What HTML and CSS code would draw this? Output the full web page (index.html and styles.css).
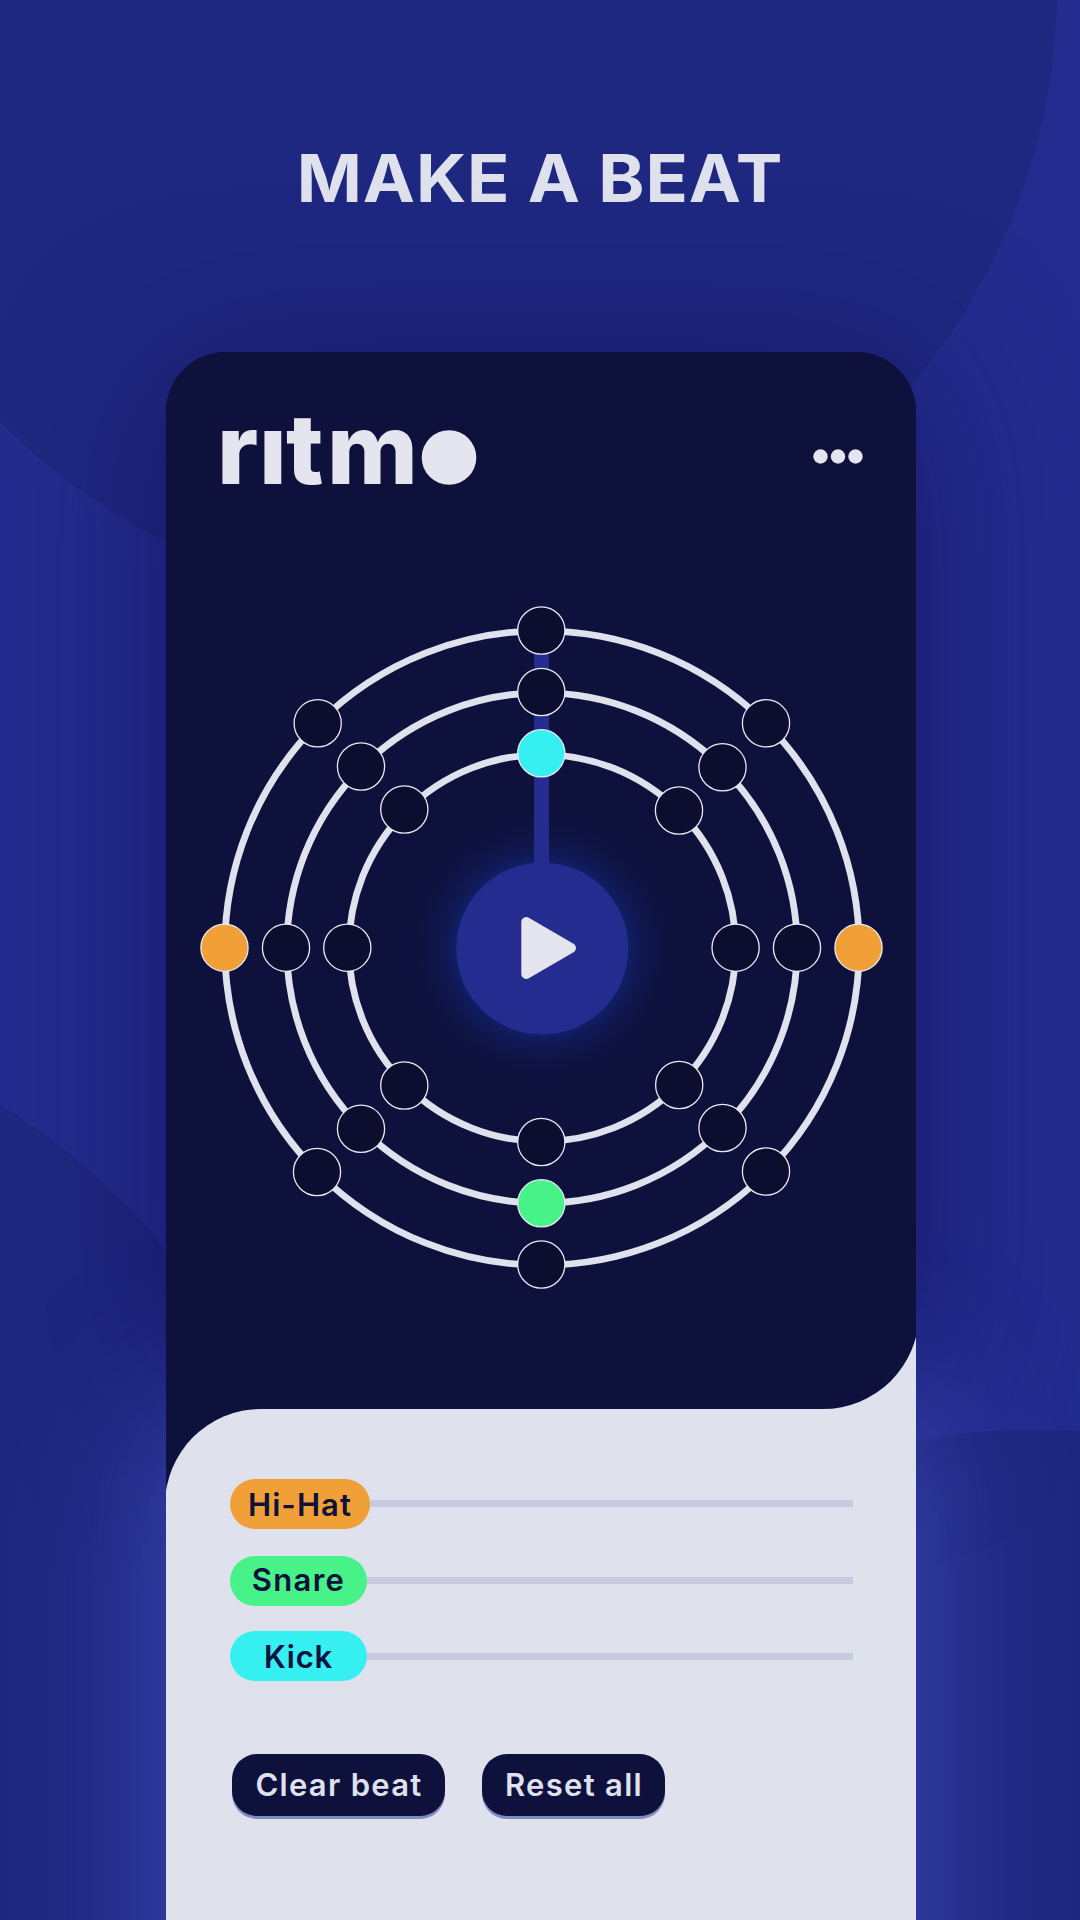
FILE: index.html
```html
<!DOCTYPE html>
<html lang="en">
<head>
<meta charset="utf-8">
<title>Ritmo</title>
<link rel="stylesheet" href="styles.css">
</head>
<body>
<main class="page">
  <svg class="backdrop" width="1080" height="1920" viewBox="0 0 1080 1920" aria-hidden="true">
    <circle cx="439" cy="-13" r="618"/>
    <circle cx="-319" cy="1634" r="618"/>
    <circle cx="1030" cy="2048" r="618"/>
  </svg>
  <h1 class="title">MAKE A BEAT</h1>
  <section class="phone">
    <div class="player">
      <div class="deck">
        <header class="topbar">
          <svg class="logo" width="256" height="72" viewBox="0 0 256 72" role="img" aria-label="ritmo">
            <text class="logo-text" x="-5 37 64 105" y="68">rıtm</text>
            <circle cx="227" cy="41.5" r="27.3"/>
          </svg>
          <svg class="menu" width="50" height="16" viewBox="0 0 50 16" role="img" aria-label="Menu">
            <circle cx="7.5" cy="8.5" r="7.2"/><circle cx="25" cy="8.5" r="7.2"/><circle cx="42.5" cy="8.5" r="7.2"/>
          </svg>
        </header>
        <svg class="sequencer" width="750" height="720" viewBox="166 588 750 720">
          <defs>
            <radialGradient id="glow">
              <stop offset="0.6" stop-color="#10206c"/>
              <stop offset="0.7" stop-color="#101a58" stop-opacity="0.85"/>
              <stop offset="0.82" stop-color="#0e164a" stop-opacity="0.6"/>
              <stop offset="1" stop-color="#0e1340" stop-opacity="0"/>
            </radialGradient>
          </defs>
          <circle cx="542.3" cy="948.5" r="138" fill="url(#glow)"/>
          <g class="rings">
            <circle cx="542" cy="948" r="317.2"/>
            <circle cx="542" cy="948" r="255.2"/>
            <circle cx="542.3" cy="948" r="193.4"/>
          </g>
          <rect class="hand" x="534" y="640" width="15" height="225"/>
          <g class="nodes">
            <circle cx="541.3" cy="630.5" r="23.6"/>
            <circle cx="766" cy="723.3" r="23.6"/>
            <circle class="hihat" cx="858.5" cy="947.7" r="23.6"/>
            <circle cx="766" cy="1171.5" r="23.6"/>
            <circle cx="541.3" cy="1264.5" r="23.6"/>
            <circle cx="317" cy="1172" r="23.6"/>
            <circle class="hihat" cx="224.5" cy="947.7" r="23.6"/>
            <circle cx="317.7" cy="723.3" r="23.6"/>
            <circle cx="541.3" cy="692" r="23.6"/>
            <circle cx="722.5" cy="767.3" r="23.6"/>
            <circle cx="797" cy="947.7" r="23.6"/>
            <circle cx="722.5" cy="1128" r="23.6"/>
            <circle class="snare" cx="541.3" cy="1203.3" r="23.6"/>
            <circle cx="361" cy="1128.8" r="23.6"/>
            <circle cx="286" cy="947.7" r="23.6"/>
            <circle cx="361" cy="766.5" r="23.6"/>
            <circle class="kick" cx="541.3" cy="753.3" r="23.6"/>
            <circle cx="679" cy="810.5" r="23.6"/>
            <circle cx="735.6" cy="947.7" r="23.6"/>
            <circle cx="679.2" cy="1085" r="23.6"/>
            <circle cx="541.3" cy="1142" r="23.6"/>
            <circle cx="404.3" cy="1085.5" r="23.6"/>
            <circle cx="347.3" cy="947.7" r="23.6"/>
            <circle cx="404.3" cy="809.5" r="23.6"/>
          </g>
          <circle class="button-face" cx="542.3" cy="948.5" r="86"/>
          <path class="play" d="M526.3 922V974L571 948Z"/>
        </svg>
      </div>
    </div>
    <div class="controls">
      <div class="panel">
        <ul class="tracks">
          <li class="track hi"><span class="pill">Hi-Hat</span><span class="line"></span></li>
          <li class="track sn"><span class="pill">Snare</span><span class="line"></span></li>
          <li class="track ki"><span class="pill">Kick</span><span class="line"></span></li>
        </ul>
        <div class="actions">
          <button class="action clear">Clear beat</button>
          <button class="action reset">Reset all</button>
        </div>
      </div>
    </div>
  </section>
</main>
</body>
</html>
```

FILE: styles.css
```css
* { box-sizing: border-box; }
body {
  margin: 0;
  background: #242d8f;
  font-family: Inter, "Open Sans", sans-serif;
}
.page {
  position: relative;
  width: 1080px;
  height: 1920px;
  overflow: hidden;
  isolation: isolate;
}
.backdrop {
  position: absolute;
  inset: 0;
  z-index: -1;
  fill: #1f2880;
}
.title {
  margin: 0;
  padding-top: 138px;
  height: 352px;
  text-align: center;
  font-size: 66px;
  line-height: 80px;
  font-weight: 700;
  letter-spacing: .8px;
  transform: scaleX(1.06);
  color: #dfe1ed;
}
.phone {
  position: relative;
  isolation: isolate;
  width: 750px;
  height: 1568px;
  margin-left: 166px;
  display: flex;
  flex-direction: column;
}
/* Soft shadow behind the player, light bloom behind the controls */
.phone::before,
.phone::after {
  content: "";
  position: absolute;
  left: 0;
  right: 0;
  z-index: -1;
}
.phone::before {
  top: 20px;
  height: 1020px;
  border-radius: 60px;
  box-shadow: 0 0 160px rgba(15, 15, 88, .72);
}
.phone::after {
  top: 1040px;
  height: 900px;
  border-radius: 96px 60px 0 0;
  box-shadow: 0 0 150px rgba(72, 84, 200, .75);
}
.player {
  height: 1057px;
  overflow: hidden;
  border-radius: 60px 60px 0 0;
  background: linear-gradient(#0f113d 50%, #dfe1ed 50%);
}
.deck {
  height: 100%;
  margin-right: -3px;
  border-radius: 0 0 96px 0;
  background: #0f113d;
}
.topbar {
  display: flex;
  justify-content: space-between;
  align-items: center;
  height: 236px;
  padding: 0 56px 28px 56px;
}
.logo {
  margin-bottom: 9px;
  fill: #e4e5ee;
  overflow: visible;
}
.logo-text {
  font-size: 98px;
  font-weight: 800;
}
.menu { fill: #e4e5ee; }
.sequencer { display: block; }
.rings { fill: none; stroke: #dfe1ed; stroke-width: 6.8; }
.hand, .button-face { fill: #242d8f; }
.nodes { fill: #0c0e30; stroke: #e9eaf2; stroke-width: 1.3; }
.hihat { fill: #f0a036; }
.snare { fill: #47f288; }
.kick { fill: #35eff1; }
.play { fill: #e4e5ee; stroke: #e4e5ee; stroke-width: 10; stroke-linejoin: round; }
.controls {
  flex: 1;
  overflow: hidden;
  background: #0f113d;
}
.panel {
  height: 100%;
  margin-left: -1px;
  padding: 70px 63px 0 65px;
  border-radius: 96px 0 0 0;
  background: #dfe1ed;
}
.tracks {
  margin: 0;
  padding: 0;
  list-style: none;
}
.track {
  display: flex;
  align-items: center;
  height: 50px;
  margin-bottom: 25px;
}
.track.hi { margin-bottom: 27px; }
.pill {
  width: 137px;
  height: 50px;
  border-radius: 25px;
  text-align: center;
  font-size: 31px;
  line-height: 51px;
  font-weight: 600;
  color: #0f113d;
}
.hi .pill { width: 140px; background: #f0a036; letter-spacing: 1.1px; }
.sn .pill { background: #47f288; line-height: 48px; letter-spacing: 1.3px; }
.ki .pill { background: #35eff1; letter-spacing: .8px; }
.line {
  flex: 1;
  height: 7px;
  background: #c6cbe0;
}
.hi .line, .sn .line { margin-bottom: 2px; }
.actions {
  display: flex;
  gap: 37px;
  margin: 73px 0 0 2px;
}
.action {
  width: 213px;
  height: 62px;
  padding: 0 0 0 1px;
  border: 0;
  border-radius: 25px;
  background: #0f113d;
  box-shadow: 0 3px 0 #808bc0;
  font: 600 31px/62px Inter, "Open Sans", sans-serif;
  letter-spacing: 1.3px;
  color: #dfe1ed;
}
.reset { width: 183px; }
```
